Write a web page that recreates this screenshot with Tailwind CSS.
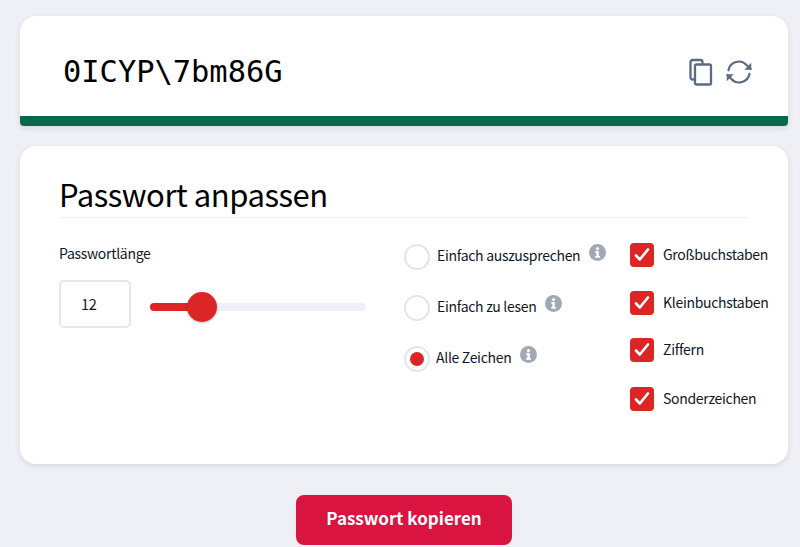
<!DOCTYPE html>
<html lang="de">
<head>
<meta charset="utf-8">
<script src="https://cdn.jsdelivr.net/npm/@tailwindcss/browser@4"></script>
</head>
<body class="h-[547px] w-[800px] overflow-hidden bg-[#eff0f5] font-['Noto_Sans_CJK_SC',sans-serif] text-[#0f172a]">
<main class="flex flex-col pl-5 pr-3 pt-4">
  <section class="flex h-[110px] flex-col overflow-hidden rounded-t-2xl rounded-b-[4px] bg-white shadow-[0_2px_6px_rgba(0,0,0,0.1)]">
    <div class="flex h-[100px] items-center justify-between pl-[43px] pr-[35px] pt-[12px]">
      <span class="font-['DejaVu_Sans_Mono',monospace] text-[30.4px] leading-none text-black">0ICYP\7bm86G</span>
      <div class="flex items-center gap-[9px] text-[#5b6b82]">
        <svg class="h-7 w-7" viewBox="0 0 28 28" fill="none" stroke="currentColor" stroke-width="2.3" stroke-linejoin="round" stroke-linecap="round"><path d="M5.5 21.5H4.5a2 2 0 0 1-2-2V4a2 2 0 0 1 2-2h8a2 2 0 0 1 2 2v1.5"/><rect x="7" y="6.5" width="16" height="20" rx="1.5"/></svg>
        <svg class="h-7 w-7" viewBox="0 0 24 24" fill="none" stroke="currentColor" stroke-width="1.9" stroke-linejoin="round" stroke-linecap="round"><path d="M3 10.5A9 9 0 0 1 18.5 6L22 9.5"/><path d="M22.5 4v6h-6" fill="currentColor" stroke="none"/><path d="M21 13.5A9 9 0 0 1 5.5 18L2 14.5"/><path d="M1.5 20v-6h6" fill="currentColor" stroke="none"/></svg>
      </div>
    </div>
    <div class="h-2.5 bg-[#046a4b]"></div>
  </section>

  <section class="mt-5 flex h-[318px] flex-col rounded-2xl bg-white pl-[39px] shadow-[0_2px_6px_rgba(0,0,0,0.1)]">
    <h1 class="mr-[39px] mt-[28px] h-[44px] border-b border-[#eff0f5] text-[31px] leading-[39px] tracking-[-0.45px] text-black">Passwort anpassen</h1>
    <div class="flex pt-[26px] text-[14px] leading-5 tracking-[-0.3px]">
      <div class="w-[345px]">
        <label class="mt-[-1px] block">Passwortlänge</label>
        <div class="mt-[17px] flex items-center">
          <div class="flex h-12 w-[72px] items-center rounded-[5px] border-2 border-[#e5e7eb] pl-[20px] text-[14.5px]">12</div>
          <div class="relative ml-[19px] mt-[5px] h-2 w-[216px] rounded-full bg-[#eff0f5]">
            <div class="h-2 w-[52px] rounded-full bg-[#dc2626]"></div>
            <div class="absolute left-[37px] top-[-11px] h-[30px] w-[30px] rounded-full bg-[#dc2626] shadow-[0_1px_3px_rgba(0,0,0,0.25)]"></div>
          </div>
        </div>
      </div>
      <div class="flex w-[226px] flex-col">
        <div class="flex h-[26px] items-center">
          <span class="h-[26px] w-[26px] rounded-full border-2 border-[#e2e6ec] bg-white"></span>
          <span class="mb-[4px] ml-[7px]">Einfach auszusprechen</span>
          <svg class="ml-[9px] mt-[-9px] h-[17px] w-[17px]" viewBox="0 0 18 18"><circle cx="9" cy="9" r="9" fill="#a2a9b5"/><circle cx="9" cy="4.8" r="1.7" fill="#fff"/><path d="M6.6 7.5h3.8v5.3h1.2v1.8H6.6v-1.8h1.2V9.3H6.6z" fill="#fff"/></svg>
        </div>
        <div class="mt-[25px] flex h-[26px] items-center">
          <span class="h-[26px] w-[26px] rounded-full border-2 border-[#e2e6ec] bg-white"></span>
          <span class="mb-[4px] ml-[7px]">Einfach zu lesen</span>
          <svg class="ml-[9px] mt-[-9px] h-[17px] w-[17px]" viewBox="0 0 18 18"><circle cx="9" cy="9" r="9" fill="#a2a9b5"/><circle cx="9" cy="4.8" r="1.7" fill="#fff"/><path d="M6.6 7.5h3.8v5.3h1.2v1.8H6.6v-1.8h1.2V9.3H6.6z" fill="#fff"/></svg>
        </div>
        <div class="mt-[25px] flex h-[26px] items-center">
          <span class="flex h-[26px] w-[26px] items-center justify-center rounded-full border-2 border-[#e2e6ec] bg-white"><span class="h-[14px] w-[14px] rounded-full bg-[#dc2626]"></span></span>
          <span class="mb-[4px] ml-[6px]">Alle Zeichen</span>
          <svg class="ml-[9px] mt-[-9px] h-[17px] w-[17px]" viewBox="0 0 18 18"><circle cx="9" cy="9" r="9" fill="#a2a9b5"/><circle cx="9" cy="4.8" r="1.7" fill="#fff"/><path d="M6.6 7.5h3.8v5.3h1.2v1.8H6.6v-1.8h1.2V9.3H6.6z" fill="#fff"/></svg>
        </div>
      </div>
      <div class="mt-[-1px] flex flex-col">
        <div class="flex h-6 items-center gap-[9px]"><span class="flex h-6 w-6 items-center justify-center rounded-[4px] bg-[#dc2626]"><svg class="h-5 w-5" viewBox="0 0 20 20" fill="none" stroke="#fff" stroke-width="2.6" stroke-linecap="round" stroke-linejoin="round"><path d="M4 10.5l3.8 4L16 4.5"/></svg></span><span class="mb-[2px]">Großbuchstaben</span></div>
        <div class="mt-6 flex h-6 items-center gap-[9px]"><span class="flex h-6 w-6 items-center justify-center rounded-[4px] bg-[#dc2626]"><svg class="h-5 w-5" viewBox="0 0 20 20" fill="none" stroke="#fff" stroke-width="2.6" stroke-linecap="round" stroke-linejoin="round"><path d="M4 10.5l3.8 4L16 4.5"/></svg></span><span class="mb-[2px]">Kleinbuchstaben</span></div>
        <div class="mt-[23px] flex h-6 items-center gap-[9px]"><span class="flex h-6 w-6 items-center justify-center rounded-[4px] bg-[#dc2626]"><svg class="h-5 w-5" viewBox="0 0 20 20" fill="none" stroke="#fff" stroke-width="2.6" stroke-linecap="round" stroke-linejoin="round"><path d="M4 10.5l3.8 4L16 4.5"/></svg></span><span class="mb-[2px]">Ziffern</span></div>
        <div class="mt-[25px] flex h-6 items-center gap-[9px]"><span class="flex h-6 w-6 items-center justify-center rounded-[4px] bg-[#dc2626]"><svg class="h-5 w-5" viewBox="0 0 20 20" fill="none" stroke="#fff" stroke-width="2.6" stroke-linecap="round" stroke-linejoin="round"><path d="M4 10.5l3.8 4L16 4.5"/></svg></span><span class="mb-[2px]">Sonderzeichen</span></div>
      </div>
    </div>
  </section>

  <button class="ml-[276px] mt-[31px] h-[50px] w-[216px] rounded-lg bg-[#d91440] pb-1 text-[17px] font-bold text-white">Passwort kopieren</button>
</main>
</body>
</html>
